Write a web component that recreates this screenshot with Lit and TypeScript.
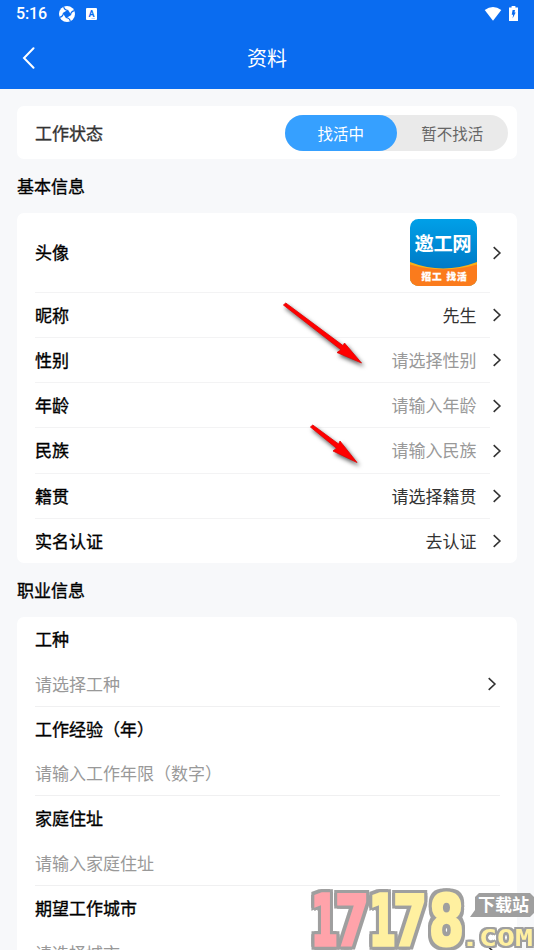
import { LitElement, html, svg, css, nothing } from "lit";
import { customElement, property } from "lit/decorators.js";

@customElement("chevron-icon")
class ChevronIcon extends LitElement {
  static styles = css`
    :host { display: block; width: 10px; height: 14px; }
    svg { display: block; }
    path { fill: none; stroke: #333; stroke-width: 1.6; }
  `;
  render() {
    return html`<svg width="10" height="14" viewBox="0 0 10 14"><path d="M1.7 1.2 7.9 7 1.7 12.8" /></svg>`;
  }
}

@customElement("status-bar")
class StatusBar extends LitElement {
  static styles = css`
    :host { display: flex; align-items: center; height: 28px; padding: 0 16px 0 16px; color: #fff; }
    .time { font: 500 16px/28px Roboto, sans-serif; letter-spacing: -0.1px; width: 43px; }
    .ball { margin-right: 11px; }
    .grow { flex: 1; }
    .wifi { margin: 0 7px 1px 0; }
    .battery { margin-bottom: 2px; }
    svg { display: block; }
    .a { font: 700 9px Roboto, sans-serif; fill: #0a6cf0; }
  `;
  render() {
    return html`
      <span class="time">5:16</span>
      <svg class="ball" width="16" height="16" viewBox="0 0 16 16">
        <circle cx="8" cy="8" r="8" fill="#fff" />
        <path d="M9 3.8 12.2 9 7 12.2 3.8 7Z" fill="#0a6cf0" />
        <g fill="none" stroke="#0a6cf0" stroke-width="1.2">
          <path d="M8.8 4.5Q5.2 4 4.6.4" />
          <path d="M11.5 8.8Q12 5.2 15.6 4.6" />
          <path d="M7.2 11.5Q10.8 12 11.4 15.6" />
          <path d="M4.5 7.2Q4 10.8.4 11.4" />
        </g>
      </svg>
      <svg width="11" height="12" viewBox="0 0 11 12">
        <rect width="11" height="12" rx="1" fill="#fff" />
        <text class="a" x="2.4" y="9">A</text>
        <path d="M5.5 10.5h3.5" stroke="#9cc4fa" stroke-width=".7" />
      </svg>
      <span class="grow"></span>
      <svg class="wifi" width="18" height="14" viewBox="0 0 18 14">
        <path d="M.7 3Q9-2.8 17.3 3L9 13.8Z" fill="#fff" />
      </svg>
      <svg class="battery" width="9" height="15" viewBox="0 0 9 15">
        <path d="M2.6 0h3.8v1.4H9V15H0V1.4h2.6Z" fill="#fff" />
        <path d="M3.6 4H6L5.5 6.4H6.7L3.6 12.5 4.1 8.7H2.7Z" fill="#0a6cf0" />
      </svg>
    `;
  }
}

@customElement("info-row")
class InfoRow extends LitElement {
  @property() label = "";
  @property() value = "";
  @property({ type: Boolean }) muted = false;
  @property({ type: Boolean }) last = false;
  @property({ type: Boolean }) avatar = false;

  static styles = css`
    :host { display: flex; align-items: stretch; height: 45.25px; padding-left: 18px; }
    :host([avatar]) { height: 79.5px; }
    .main { flex: 1; display: flex; align-items: center; justify-content: space-between; padding-right: 13px; border-bottom: 1px solid #f3f3f4; box-sizing: border-box; }
    .main.last { border-color: transparent; }
    .label { color: #000; -webkit-text-stroke: 0.35px #000; }
    .value { color: #333; margin-right: 0.5px; }
    .value.muted { color: #999; }
    .tail { width: 27px; display: flex; align-items: center; padding-left: 2px; box-sizing: border-box; }
    .logo { display: block; }
    .name { font: 700 19.3px "Noto Sans CJK SC", sans-serif; fill: #fff; }
    .slogan { font: 900 9.6px "Noto Sans CJK SC", sans-serif; fill: #fff; stroke: #fff; stroke-width: .3px; }
  `;
  logo() {
    return html`<svg class="logo" width="67" height="67" viewBox="0 0 67 67">
      <defs>
        <clipPath id="r"><rect width="67" height="67" rx="8.5" /></clipPath>
        <linearGradient id="g" x2="0" y2="1"><stop stop-color="#00a0e8" /><stop offset=".75" stop-color="#0079c5" /></linearGradient>
      </defs>
      <g clip-path="url(#r)">
        <rect width="67" height="67" fill="url(#g)" />
        <path d="M0 43Q33 56 67 43V67H0Z" fill="#fcb016" />
        <path d="M0 45.5Q33 55 67 45.5V67H0Z" fill="#fb7b1c" />
      </g>
      <text class="name" x="4.6" y="32.2" textLength="57">邀工网</text>
      <text class="slogan" x="11.5" y="61.2" textLength="20">招工</text>
      <text class="slogan" x="36.5" y="61.2" textLength="20">找活</text>
    </svg>`;
  }
  render() {
    return html`
      <div class="main ${this.last ? "last" : ""}">
        <span class="label">${this.label}</span>
        ${this.avatar ? this.logo() : html`<span class="value ${this.muted ? "muted" : ""}">${this.value}</span>`}
      </div>
      <div class="tail"><chevron-icon></chevron-icon></div>
    `;
  }
}

@customElement("form-field")
class FormField extends LitElement {
  @property() label = "";
  @property() hint = "";
  @property({ type: Boolean }) picker = false;

  static styles = css`
    :host { display: block; height: 89.65px; margin: 0 17px 0 18px; box-sizing: border-box; border-bottom: 1px solid #f0f0f1; }
    .label { height: 44px; line-height: 43.4px; color: #000; -webkit-text-stroke: 0.35px #000; }
    .entry { height: 45.4px; display: flex; align-items: center; justify-content: space-between; color: #999; padding-right: 3px; }
  `;
  render() {
    return html`
      <div class="label">${this.label}</div>
      <div class="entry"><span>${this.hint}</span>${this.picker ? html`<chevron-icon></chevron-icon>` : nothing}</div>
    `;
  }
}

@customElement("site-mark")
class SiteMark extends LitElement {
  static styles = css`
    :host { display: block; }
    svg { display: block; overflow: visible; }
    .digits { filter: drop-shadow(3px 0 0 #9f9f9f) drop-shadow(-3px 0 0 #9f9f9f) drop-shadow(0 3px 0 #9f9f9f) drop-shadow(0 -3px 0 #9f9f9f); }
    .suffix { filter: drop-shadow(2px 0 0 #9f9f9f) drop-shadow(-2px 0 0 #9f9f9f) drop-shadow(0 2px 0 #9f9f9f) drop-shadow(0 -2px 0 #9f9f9f); }
    .digit { font: 700 69px "DejaVu Sans", sans-serif; stroke-width: 3px; }
    .slab { stroke-width: 3.6px; }
    .com { font: 700 23px "DejaVu Sans Mono", monospace; fill: #fff0a0; }
    .tag { font: 700 17px "Noto Sans CJK SC", sans-serif; fill: #fff; }
    .red { fill: #ffa3aa; stroke: #ffa3aa; }
    .yellow { fill: #fff0a0; stroke: #fff0a0; }
  `;
  render() {
    const digits = [
      { c: "1", x: 0, w: 27, k: "slab red" },
      { c: "7", x: 24, w: 34, k: "red" },
      { c: "1", x: 58, w: 27, k: "slab yellow" },
      { c: "7", x: 82, w: 34, k: "yellow" },
      { c: "8", x: 118, w: 35, k: "yellow" },
    ];
    return html`<svg width="223" height="61" viewBox="0 0 223 61">
      <g class="digits">
        ${digits.map((d) => svg`<text class="digit ${d.k}" x=${d.x} y="55.5" textLength=${d.w} lengthAdjust="spacingAndGlyphs">${d.c}</text>`)}
      </g>
      <path d="M168 4H219L223 8V24L219 28H159L164 21V8Z" fill="#9f9f9f" />
      <text class="tag" x="167" y="22" textLength="51">下载站</text>
      <g class="suffix"><text class="com" x="150" y="57" textLength="72" lengthAdjust="spacingAndGlyphs">.COM</text></g>
    </svg>`;
  }
}

@customElement("app-root")
class AppRoot extends LitElement {
  static styles = css`
    :host { display: block; position: relative; width: 534px; height: 950px; overflow: hidden; background: #f7f8fa; font: 17px/24px "Noto Sans CJK SC", sans-serif; }
    .header { height: 89px; background: #0a6cf0; color: #fff; }
    .nav { display: grid; grid-template-columns: 60px 1fr 60px; align-items: center; height: 60px; }
    .back { margin-left: 22px; }
    .title { text-align: center; font-size: 20px; }
    .card { margin: 0 17px; background: #fff; border-radius: 7px; }
    .status { display: flex; align-items: center; justify-content: space-between; margin-top: 17px; height: 53px; padding: 0 9px 0 18px; box-sizing: border-box; }
    .status-label { color: #333; -webkit-text-stroke: 0.35px #333; }
    .toggle { display: flex; width: 223px; height: 36px; border-radius: 18px; background: #eaeaea; font-size: 15.5px; line-height: 36px; text-align: center; color: #666; }
    .option { flex: 1; }
    .option.on { border-radius: 18px; background: #36a0ff; color: #fff; }
    .section { margin: 0 17px; height: 54px; line-height: 54px; color: #000; -webkit-text-stroke: 0.35px #000; }
    .basic { height: 350px; }
    .arrows { position: absolute; left: 270px; top: 290px; filter: drop-shadow(2px 3px 2px rgba(0, 0, 0, 0.65)); }
    .mark { position: absolute; left: 311px; top: 889px; }
  `;
  render() {
    return html`
      <div class="header">
        <status-bar></status-bar>
        <div class="nav">
          <svg class="back" width="14" height="22" viewBox="0 0 14 22"><path d="M11.5 1.2 2 11l9.5 9.8" fill="none" stroke="#fff" stroke-width="2" stroke-linecap="round" /></svg>
          <span class="title">资料</span>
        </div>
      </div>
      <div class="card status">
        <span class="status-label">工作状态</span>
        <div class="toggle"><span class="option on">找活中</span><span class="option">暂不找活</span></div>
      </div>
      <div class="section">基本信息</div>
      <div class="card basic">
        <info-row label="头像" avatar></info-row>
        <info-row label="昵称" value="先生"></info-row>
        <info-row label="性别" value="请选择性别" muted></info-row>
        <info-row label="年龄" value="请输入年龄" muted></info-row>
        <info-row label="民族" value="请输入民族" muted></info-row>
        <info-row label="籍贯" value="请选择籍贯"></info-row>
        <info-row label="实名认证" value="去认证" last></info-row>
      </div>
      <div class="section">职业信息</div>
      <div class="card">
        <form-field label="工种" hint="请选择工种" picker></form-field>
        <form-field label="工作经验（年）" hint="请输入工作年限（数字）"></form-field>
        <form-field label="家庭住址" hint="请输入家庭住址"></form-field>
        <form-field label="期望工作城市" hint="请选择城市" picker></form-field>
      </div>
      <svg class="arrows" width="110" height="190" viewBox="0 0 110 190">
        <g fill="#f00" stroke="#e00404" stroke-width=".8">
          <path d="M13.4 15 15.8 13 73 55.6 74.5 53 91.5 73 67 62.5 71 59.8Z" />
          <path d="M40.4 137 42.8 135 68.6 154 70 151 87 172.5 63 161 66.5 158.2Z" />
        </g>
      </svg>
      <site-mark class="mark"></site-mark>
    `;
  }
}
